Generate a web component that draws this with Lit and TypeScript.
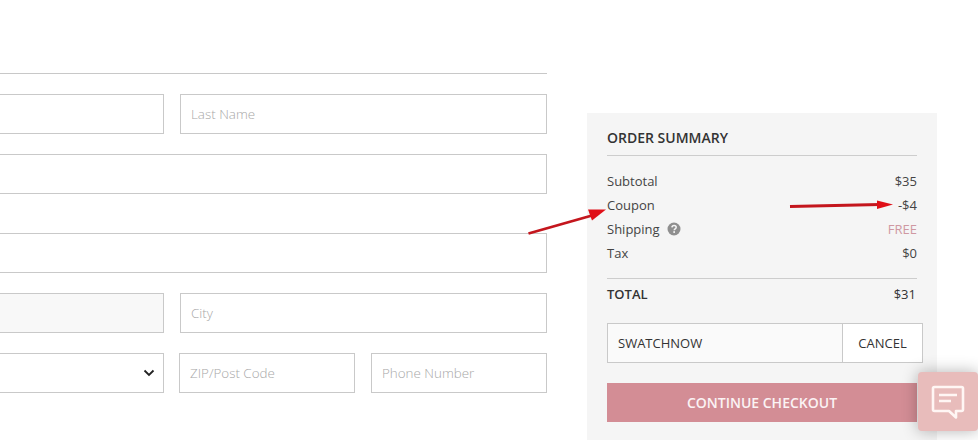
import { LitElement, html, css } from "lit";
import { customElement } from "lit/decorators.js";

@customElement("app-root")
export class AppRoot extends LitElement {
  static styles = css`
    :host {
      display: block;
      position: relative;
      width: 978px;
      height: 440px;
      overflow: hidden;
      background: #fff;
      font-family: "Open Sans", "Liberation Sans", sans-serif;
      font-size: 13px;
      color: #333;
    }
    .page { display: flex; align-items: flex-start; gap: 40px; }
    .form { width: 547px; padding-top: 73px; flex: none; }
    .rule { height: 1px; background: #c8c8c8; margin-bottom: 20px; }
    .row { display: flex; height: 40px; margin-bottom: 20px; }
    .row.address { margin-top: 39px; }
    .field {
      box-sizing: border-box;
      height: 40px;
      border: 1px solid #c9c9c9;
      display: flex;
      align-items: center;
      padding-left: 10px;
      color: #a8a8a8;
      font-size: 13.4px;
      font-weight: 300;
      background: #fff;
    }
    .clip-left { border-left: none; }
    .w164 { width: 164px; }
    .w367 { width: 367px; margin-left: 16px; }
    .full { width: 547px; }
    .filled { background: #f8f8f8; }
    .select { justify-content: flex-end; padding-right: 8px; }
    .zip { width: 176px; margin-left: 15px; }
    .phone { width: 176px; margin-left: 16px; }
    .summary {
      box-sizing: border-box;
      width: 350px;
      height: 327px;
      margin-top: 113px;
      flex: none;
      background: #f5f5f5;
      padding: 16px 20px 0;
    }
    h2 {
      margin: 0;
      font-size: 14px;
      line-height: 18px;
      font-weight: 600;
      color: #333;
      padding-bottom: 8px;
      border-bottom: 1px solid #cdcdcd;
    }
    .lines { padding: 13px 0 13px; border-bottom: 1px solid #cdcdcd; }
    .line { display: flex; justify-content: space-between; align-items: center; height: 24px; color: #444; }
    .label { display: flex; align-items: center; gap: 7px; }
    .free { color: #cf98a2; }
    .total { display: flex; justify-content: space-between; align-items: center; height: 30px; font-weight: 600; color: #333; }
    .total span:last-child { font-weight: 400; padding-right: 1px; }
    .coupon {
      box-sizing: border-box;
      display: flex;
      width: 316px;
      height: 40px;
      margin-top: 14px;
      border: 1px solid #c9c9c9;
      background: #fff;
      color: #333;
      font-size: 13px;
    }
    .code { flex: 1; display: flex; align-items: center; padding-left: 10px; background: #fafafa; }
    .cancel { box-sizing: border-box; width: 80px; display: flex; align-items: center; justify-content: center; border-left: 1px solid #c9c9c9; }
    .checkout {
      height: 39px;
      margin-top: 20px;
      background: #d38d95;
      color: #fbf3f4;
      font-size: 14px;
      font-weight: 600;
      display: flex;
      align-items: center;
      justify-content: center;
    }
    .chat {
      position: absolute;
      left: 918px;
      top: 372px;
      width: 60px;
      height: 59px;
      border-radius: 4px;
      background: #e8bcbb;
      box-shadow: 0 0 16px rgba(0, 0, 0, 0.3);
      display: flex;
      align-items: center;
      justify-content: center;
    }
    .arrows { position: absolute; left: 0; top: 0; pointer-events: none; }
  `;

  render() {
    return html`
      <div class="page">
        <div class="form">
          <div class="rule"></div>
          <div class="row">
            <div class="field clip-left w164"></div>
            <div class="field w367">Last Name</div>
          </div>
          <div class="row"><div class="field clip-left full"></div></div>
          <div class="row address"><div class="field clip-left full"></div></div>
          <div class="row">
            <div class="field clip-left w164 filled"></div>
            <div class="field w367">City</div>
          </div>
          <div class="row">
            <div class="field clip-left w164 select">
              <svg width="12" height="8" viewBox="0 0 12 8"><path d="M1.5 1.5 6 6l4.5-4.5" fill="none" stroke="#222" stroke-width="1.8"/></svg>
            </div>
            <div class="field zip">ZIP/Post Code</div>
            <div class="field phone">Phone Number</div>
          </div>
        </div>
        <div class="summary">
          <h2>ORDER SUMMARY</h2>
          <div class="lines">
            <div class="line"><span>Subtotal</span><span>$35</span></div>
            <div class="line"><span>Coupon</span><span>-$4</span></div>
            <div class="line">
              <span class="label">Shipping
                <svg width="14" height="14" viewBox="0 0 14 14">
                  <circle cx="7" cy="7" r="6.5" fill="#8f8f8f"/>
                  <path d="M4.9 5.4C5 4.2 5.9 3.5 7.1 3.5c1.2 0 2.1.7 2.1 1.8 0 1.6-2 1.6-2 3" fill="none" stroke="#f5f5f5" stroke-width="1.5"/>
                  <rect x="6.3" y="9.2" width="1.7" height="1.7" fill="#f5f5f5"/>
                </svg>
              </span>
              <span class="free">FREE</span>
            </div>
            <div class="line"><span>Tax</span><span>$0</span></div>
          </div>
          <div class="total"><span>TOTAL</span><span>$31</span></div>
          <div class="coupon">
            <div class="code">SWATCHNOW</div>
            <div class="cancel">CANCEL</div>
          </div>
          <div class="checkout">CONTINUE CHECKOUT</div>
        </div>
      </div>
      <svg class="arrows" width="978" height="440" viewBox="0 0 978 440">
        <path d="M528.500 233.500 592 215.500" stroke="#c4161d" stroke-width="2.800" fill="none"/>
        <path d="M606 209.500 588 209.500 592 220.500Z" fill="#e01018"/>
        <path d="M790 206.500 880 204.500" stroke="#c4161d" stroke-width="3" fill="none"/>
        <path d="M893 204.500 877 200.500 877 209Z" fill="#e01018"/>
      </svg>
      <div class="chat">
        <svg width="34" height="36" viewBox="0 0 34 36">
          <path d="M3.500 3h27a1.500 1.500 0 0 1 1.500 1.500v21a1.500 1.500 0 0 1-1.500 1.500H25v6.500L18 27H3.500A1.500 1.500 0 0 1 2 25.500v-21A1.500 1.500 0 0 1 3.500 3Z" fill="none" stroke="#fff6f4" stroke-width="2.600" stroke-linejoin="round"/>
          <path d="M8 11h18M8 17h12" stroke="#fff6f4" stroke-width="2.600"/>
        </svg>
      </div>
    `;
  }
}
